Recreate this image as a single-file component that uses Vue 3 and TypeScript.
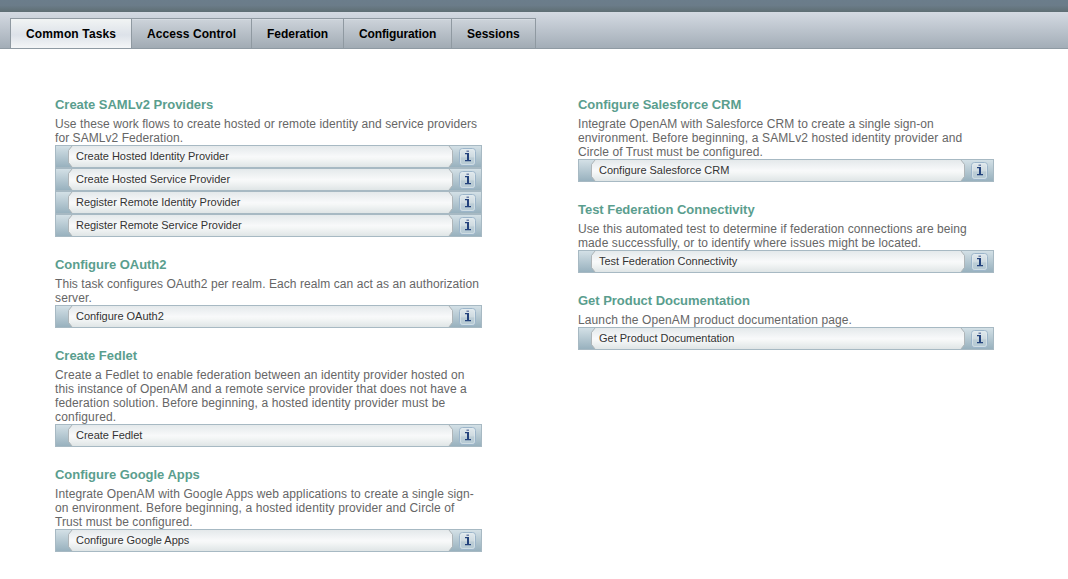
<script setup lang="ts">
interface Line {
  text: string
  tracking: number
}

interface Section {
  title: string
  lines: Line[]
  tasks: string[]
}

interface Tab {
  label: string
  width: number
  tracking: number
}

const line = (text: string, tracking: number): Line => ({ text, tracking })

const tabs: Tab[] = [
  { label: 'Common Tasks', width: 122, tracking: 0.14 },
  { label: 'Access Control', width: 120, tracking: 0.08 },
  { label: 'Federation', width: 92, tracking: -0.02 },
  { label: 'Configuration', width: 108, tracking: -0.12 },
  { label: 'Sessions', width: 84, tracking: 0 },
]

const columns: Section[][] = [
  [
    {
      title: 'Create SAMLv2 Providers',
      lines: [
        line('Use these work flows to create hosted or remote identity and service providers', 0.077),
        line('for SAMLv2 Federation.', 0.06),
      ],
      tasks: [
        'Create Hosted Identity Provider',
        'Create Hosted Service Provider',
        'Register Remote Identity Provider',
        'Register Remote Service Provider',
      ],
    },
    {
      title: 'Configure OAuth2',
      lines: [
        line('This task configures OAuth2 per realm. Each realm can act as an authorization', 0.065),
        line('server.', 0.14),
      ],
      tasks: ['Configure OAuth2'],
    },
    {
      title: 'Create Fedlet',
      lines: [
        line('Create a Fedlet to enable federation between an identity provider hosted on', 0.107),
        line('this instance of OpenAM and a remote service provider that does not have a', 0.094),
        line('federation solution. Before beginning, a hosted identity provider must be', 0.11),
        line('configured.', 0.18),
      ],
      tasks: ['Create Fedlet'],
    },
    {
      title: 'Configure Google Apps',
      lines: [
        line('Integrate OpenAM with Google Apps web applications to create a single sign-', 0.107),
        line('on environment. Before beginning, a hosted identity provider and Circle of', 0.108),
        line('Trust must be configured.', 0.08),
      ],
      tasks: ['Configure Google Apps'],
    },
  ],
  [
    {
      title: 'Configure Salesforce CRM',
      lines: [
        line('Integrate OpenAM with Salesforce CRM to create a single sign-on', 0.08),
        line('environment. Before beginning, a SAMLv2 hosted identity provider and', 0.118),
        line('Circle of Trust must be configured.', 0.06),
      ],
      tasks: ['Configure Salesforce CRM'],
    },
    {
      title: 'Test Federation Connectivity',
      lines: [
        line('Use this automated test to determine if federation connections are being', 0.083),
        line('made successfully, or to identify where issues might be located.', 0.094),
      ],
      tasks: ['Test Federation Connectivity'],
    },
    {
      title: 'Get Product Documentation',
      lines: [line('Launch the OpenAM product documentation page.', 0.115)],
      tasks: ['Get Product Documentation'],
    },
  ],
]
</script>

<template>
  <div class="page">
    <div class="masthead"></div>
    <nav class="tabbar">
      <a
        v-for="(tab, i) in tabs"
        :key="tab.label"
        class="tab"
        :class="{ active: i === 0 }"
        :style="{ width: tab.width + 'px', letterSpacing: tab.tracking + 'px' }"
      >{{ tab.label }}</a>
    </nav>
    <main class="columns">
      <div v-for="(column, c) in columns" :key="c" class="column">
        <section v-for="section in column" :key="section.title">
          <h2>{{ section.title }}</h2>
          <p>
            <span
              v-for="row in section.lines"
              :key="row.text"
              class="line"
              :style="{ letterSpacing: row.tracking + 'px' }"
            >{{ row.text }}</span>
          </p>
          <div v-for="task in section.tasks" :key="task" class="task">
            <div class="edge"></div>
            <div class="label">
              <svg class="corners" width="5" height="21" viewBox="0 0 5 21">
                <path d="M0 0h4L1 4v13l3 4H0z" fill="url(#edgeFill)" />
                <path d="M4 0L.5 4.5v12L4 21" fill="none" stroke="#afb5b8" />
              </svg>
              <span>{{ task }}</span>
              <svg class="corners" width="5" height="21" viewBox="0 0 5 21">
                <path d="M5 0H1l3 4v13l-3 4h4z" fill="url(#edgeFill)" />
                <path d="M1 0l3.5 4.5v12L1 21" fill="none" stroke="#afb5b8" />
              </svg>
            </div>
            <div class="info">
              <svg width="19" height="19" viewBox="0 0 19 19">
                <rect x="1.5" y="1.5" width="16" height="17" rx="3" fill="url(#infoFill)" stroke="#9cb5ca" />
                <rect x="2.5" y="2.5" width="14" height="15" rx="2" fill="none" stroke="#e4ecf1" stroke-opacity=".55" />
                <path d="M8.5 3.5H11V5H8.5z" fill="#7183a9" />
                <path d="M7 6h4v7h2v1.3H7V13h2V7.2H7z" fill="#23427c" />
              </svg>
            </div>
          </div>
        </section>
      </div>
    </main>
    <svg class="defs" width="0" height="0">
      <defs>
        <linearGradient id="edgeFill" gradientUnits="userSpaceOnUse" x1="0" y1="0" x2="0" y2="21">
          <stop offset="0" stop-color="#d3e0e6" />
          <stop offset="1" stop-color="#98b1be" />
        </linearGradient>
        <linearGradient id="infoFill" x1="0" y1="0" x2="0" y2="1">
          <stop offset="0" stop-color="#e2eaee" />
          <stop offset=".5" stop-color="#cedae0" />
          <stop offset=".55" stop-color="#bccdd6" />
          <stop offset="1" stop-color="#b6cad4" />
        </linearGradient>
      </defs>
    </svg>
  </div>
</template>

<style>
body {
  background: #fff;
}
</style>

<style scoped>
.page {
  width: 1068px;
  height: 579px;
  overflow: hidden;
  background: #fff;
  font-family: "Liberation Sans", Arial, sans-serif;
}
.masthead {
  height: 12px;
  background: linear-gradient(#6b7d8b 0, #6b7c89 45%, #5e6e73 100%);
}
.tabbar {
  box-sizing: border-box;
  height: 37px;
  padding: 6px 0 0 10px;
  display: flex;
  border-bottom: 1px solid #8f9aa3;
  background: linear-gradient(#d4dae2, #a3adb7);
}
.tab {
  box-sizing: border-box;
  height: 30px;
  padding-left: 15px;
  border-top: 1px solid #8f99a1;
  border-right: 1px solid #8f99a1;
  background: linear-gradient(#e2e6ea 0, #cbd2d9 1px, #a1abb4 100%);
  color: #000;
  font-size: 12px;
  line-height: 30px;
  font-weight: bold;
  white-space: nowrap;
}
.tab.active {
  border-left: 1px solid #8f99a1;
  background: linear-gradient(#f1f4f4, #dde2e9 55%, #f4f6f7);
}
.columns {
  display: flex;
  gap: 96px;
  padding: 28px 0 0 55px;
}
.column {
  width: 427px;
}
.column + .column {
  width: 416px;
}
section {
  padding-top: 20px;
}
h2 {
  margin: 0 0 4px;
  height: 16px;
  line-height: 16px;
  font-size: 13px;
  letter-spacing: -0.03px;
  color: #5a9e8e;
}
p {
  margin: 0;
  color: #666;
  font-size: 12px;
  line-height: 14px;
}
.line {
  display: block;
  white-space: nowrap;
}
.task {
  box-sizing: border-box;
  height: 23px;
  display: flex;
  border: 1px solid #a7b9c3;
  background: linear-gradient(#d3e0e6, #98b1be);
}
.edge {
  width: 12px;
}
.label {
  flex: 1;
  display: flex;
  height: 21px;
  line-height: 21px;
  font-size: 11px;
  letter-spacing: -0.02px;
  color: #333;
  background: linear-gradient(#e4e9eb, #f8f9fa 50%, #f5f7f7 60%, #dfe5e6);
}
.label span {
  flex: 1;
  padding-left: 3px;
  white-space: nowrap;
}
.corners {
  display: block;
}
.info {
  box-sizing: border-box;
  width: 28px;
  padding: 1px 0 0 5px;
}
.info svg {
  display: block;
}
.defs {
  display: block;
}
</style>
